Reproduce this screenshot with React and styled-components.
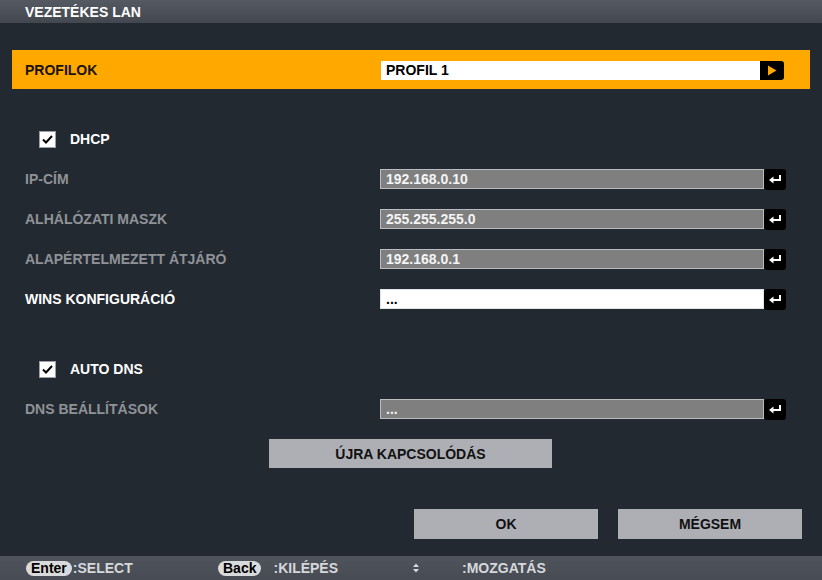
import React from "react";
import styled, { createGlobalStyle } from "styled-components";

const GlobalStyle = createGlobalStyle`
  html, body {
    margin: 0;
    padding: 0;
    background: #232931;
  }
  body {
    font-family: "Liberation Sans", Arial, sans-serif;
    font-weight: bold;
    font-size: 14px;
  }
`;

const Window = styled.div`
  width: 822px;
  height: 580px;
  display: flex;
  flex-direction: column;
  background: #232931;
  overflow: hidden;
`;

const TitleBar = styled.div`
  height: 23px;
  line-height: 24px;
  padding-left: 25px;
  color: #ffffff;
  background: linear-gradient(#555962, #43474f);
`;

const Content = styled.div`
  flex: 1;
  display: flex;
  flex-direction: column;
  padding: 27px 12px 0 12px;
`;

const ProfileBar = styled.div`
  height: 39px;
  display: flex;
  align-items: center;
  padding-left: 13px;
  background: #ffa900;
  color: #1a1208;
`;

const ProfileLabel = styled.div`
  width: 356px;
  padding-top: 1px;
`;

const ProfileInput = styled.div`
  width: 374px;
  height: 19px;
  margin-top: 2px;
  padding-left: 5px;
  line-height: 19px;
  background: #ffffff;
  color: #000000;
`;

const ArrowBox = styled.div`
  width: 24px;
  height: 19px;
  margin-top: 2px;
  display: flex;
  align-items: center;
  justify-content: center;
  background: #000000;
  border-radius: 0 3px 3px 0;
`;

const CheckRow = styled.div`
  height: 40px;
  display: flex;
  align-items: center;
  padding-left: 27px;
  margin-top: ${({ $top }) => $top}px;
  color: #ffffff;
  gap: 14px;
`;

const CheckBox = styled.div`
  width: 17px;
  height: 17px;
  box-sizing: border-box;
  border: 1px solid #9aa0a8;
  background: #ffffff;
  display: flex;
  align-items: center;
  justify-content: center;
`;

const FieldRow = styled.div`
  height: 40px;
  display: flex;
  align-items: center;
  padding-left: 13px;
`;

const Label = styled.div`
  width: 355px;
  color: ${({ $active }) => ($active ? "#ffffff" : "#8f9297")};
`;

const Field = styled.div`
  width: 384px;
  height: 20px;
  box-sizing: border-box;
  border: 1px solid ${({ $active }) => ($active ? "#dfe4ea" : "#b9bcc0")};
  background: ${({ $active }) => ($active ? "#ffffff" : "#7f7f7f")};
  color: ${({ $active }) => ($active ? "#000000" : "#f4f4f4")};
  padding-left: 5px;
  line-height: 19px;
`;

const EnterBtn = styled.div`
  width: 22px;
  height: 21px;
  background: #000000;
  border-radius: 3px;
  display: flex;
  align-items: center;
  justify-content: center;
`;

const WideButton = styled.div`
  width: 283px;
  height: 29px;
  margin: 10px 0 0 257px;
  display: flex;
  align-items: center;
  justify-content: center;
  background: #adafb5;
  color: #111111;
`;

const ButtonRow = styled.div`
  display: flex;
  justify-content: flex-end;
  gap: 20px;
  margin-top: 41px;
  padding-right: 8px;
`;

const Button = styled.div`
  width: 184px;
  height: 30px;
  display: flex;
  align-items: center;
  justify-content: center;
  background: #adafb5;
  color: #111111;
`;

const BottomBar = styled.div`
  height: 24px;
  display: flex;
  align-items: center;
  background: linear-gradient(#4f535c, #474b54);
  color: #d6d8db;
`;

const Hint = styled.div`
  box-sizing: border-box;
  display: flex;
  align-items: center;
  width: ${({ $w }) => $w}px;
  padding-left: ${({ $pad }) => $pad}px;
`;

const Key = styled.span`
  display: inline-block;
  height: 15px;
  line-height: 15px;
  padding: 0 5px;
  margin-right: ${({ $gap }) => $gap}px;
  border-radius: 8px;
  background: #d9dadc;
  color: #000000;
`;

const Check = () => (
  <svg width="13" height="13" viewBox="0 0 13 13">
    <path d="M2 6.5 L5 9.5 L11 3" fill="none" stroke="#000" strokeWidth="2" />
  </svg>
);

const EnterIcon = () => (
  <svg width="14" height="10" viewBox="0 0 14 10">
    <path d="M12 1 V6 H5" fill="none" stroke="#fff" strokeWidth="2" />
    <path d="M1 6 L5.5 2.5 V9.5 Z" fill="#fff" />
  </svg>
);

const PlayIcon = () => (
  <svg width="10" height="11" viewBox="0 0 10 11">
    <path d="M1 0.5 L9.5 5.5 L1 10.5 Z" fill="#ffa900" />
  </svg>
);

const UpDown = () => (
  <svg width="6" height="10" viewBox="0 0 6 10">
    <path d="M0 4 L3 0.5 L6 4 Z M0 6 L3 9.5 L6 6 Z" fill="#d6d8db" />
  </svg>
);

const rows = [
  { label: "IP-CÍM", value: "192.168.0.10" },
  { label: "ALHÁLÓZATI MASZK", value: "255.255.255.0" },
  { label: "ALAPÉRTELMEZETT ÁTJÁRÓ", value: "192.168.0.1" },
  { label: "WINS KONFIGURÁCIÓ", value: "...", active: true },
];

const InputRow = ({ label, value, active }) => (
  <FieldRow>
    <Label $active={active}>{label}</Label>
    <Field $active={active}>{value}</Field>
    <EnterBtn>
      <EnterIcon />
    </EnterBtn>
  </FieldRow>
);

export default function App() {
  return (
    <>
      <GlobalStyle />
      <Window>
        <TitleBar>VEZETÉKES LAN</TitleBar>
        <Content>
          <ProfileBar>
            <ProfileLabel>PROFILOK</ProfileLabel>
            <ProfileInput>PROFIL 1</ProfileInput>
            <ArrowBox>
              <PlayIcon />
            </ArrowBox>
          </ProfileBar>

          <CheckRow $top={30}>
            <CheckBox>
              <Check />
            </CheckBox>
            DHCP
          </CheckRow>

          {rows.map((r) => (
            <InputRow key={r.label} {...r} />
          ))}

          <CheckRow $top={30}>
            <CheckBox>
              <Check />
            </CheckBox>
            AUTO DNS
          </CheckRow>

          <InputRow label="DNS BEÁLLÍTÁSOK" value="..." />

          <WideButton>ÚJRA KAPCSOLÓDÁS</WideButton>

          <ButtonRow>
            <Button>OK</Button>
            <Button>MÉGSEM</Button>
          </ButtonRow>
        </Content>
        <BottomBar>
          <Hint $w={218} $pad={26}>
            <Key $gap={1}>Enter</Key>:SELECT
          </Hint>
          <Hint $w={195} $pad={0}>
            <Key $gap={12}>Back</Key>:KILÉPÉS
          </Hint>
          <Hint $w={49} $pad={0}>
            <UpDown />
          </Hint>
          <Hint $w={200} $pad={0}>:MOZGATÁS</Hint>
        </BottomBar>
      </Window>
    </>
  );
}
